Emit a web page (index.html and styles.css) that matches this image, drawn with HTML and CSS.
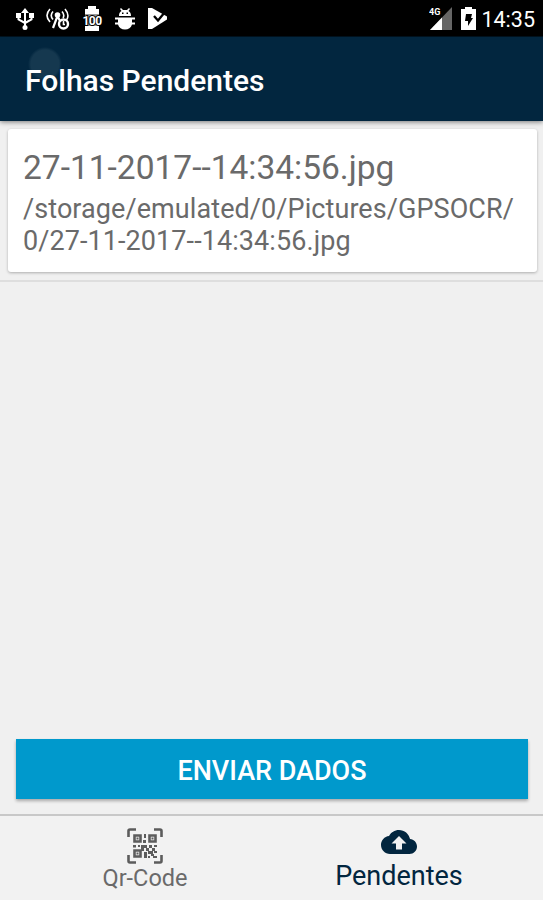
FILE: index.html
```html
<!DOCTYPE html>
<html lang="pt">
<head>
    <meta charset="UTF-8">
    <meta name="viewport" content="width=device-width, initial-scale=1.0">
    <title>Folhas Pendentes</title>
    <link rel="stylesheet" href="styles.css">
</head>
<body>
    <div class="status-bar">
        <div class="status-icons">
            <!-- usb -->
            <svg width="18" height="22" viewBox="0 0 18 22" fill="none" stroke="#fff" stroke-width="2">
                <path d="M9 3v16M2.500 7v4.500L9 15M15.500 7v4.500L9 15"/>
                <path d="M9 0l4 5H5zM0 5h5v5H0zM13 5h5v5h-5z" fill="#fff" stroke="none"/>
                <circle cx="9" cy="19.500" r="2.500" fill="#fff" stroke="none"/>
            </svg>
            <!-- antenna -->
            <svg class="antenna" width="24" height="22" viewBox="0 0 24 22" fill="none" stroke="#fff" stroke-width="1.600">
                <path d="M4 1Q-2 7.500 4 14M7 3.500Q3.500 7.500 7 11.500M19 1q5 6 1.500 11M16 3.500q3 3.500 1 6.500"/>
                <circle cx="11.500" cy="7" r="2.800" fill="#fff" stroke="none"/>
                <path d="M11.500 8L7 20M11.500 8l3 6" stroke-width="2.200"/>
                <circle cx="17.500" cy="16" r="4.500" stroke-width="2.400"/>
                <path d="M17.500 13v3.500h1.500"/>
            </svg>
            <!-- battery level -->
            <svg class="battery" width="30" height="25" viewBox="-5 0 30 25">
                <path d="M6 0h8v3h3v6H3V3h3zM3 19h14v6H3z" fill="#fff"/>
                <path d="M3 8h14v12H3z" fill="#999"/>
                <text class="battery-level" x="10" y="19" text-anchor="middle">100</text>
            </svg>
            <!-- android -->
            <svg width="20" height="22" viewBox="0 0 20 22" fill="#fff">
                <path d="M4 8c0-3 1-4 2.500-5L5 1l1-1 2 2h4l2-2 1 1-1.500 2C15 4 16 5 16 8zM0 9.500h20v2h-3v3h3v2h-3c-1 3.500-3.500 5-7 5s-6-1.500-7-5H0v-2h3v-3H0z"/>
                <path d="M7 4.500h1.500V6H7zM11.500 4.500H13V6h-1.500z" fill="#000"/>
            </svg>
            <!-- play check -->
            <svg width="20" height="21" viewBox="0 0 20 21">
                <path d="M0 0h4l15 8.500v3L4 21H0z" fill="#fff"/>
                <path d="M6 8l4 4.500L17 4" fill="none" stroke="#000" stroke-width="2.300"/>
            </svg>
        </div>
        <div class="status-info">
            <svg width="23" height="23" viewBox="0 0 23 23">
                <path d="M23 0v23H1z" fill="#666"/>
                <path d="M13 10.500V23H1z" fill="#fff"/>
                <text class="network" x="0" y="8">4G</text>
            </svg>
            <svg width="15" height="23" viewBox="0 0 15 23">
                <path d="M4 0h7v2h4v21H0V2h4z" fill="#fff"/>
                <path d="M5 7h6l-1 4h2L7 19v-5H4z" fill="#000"/>
            </svg>
            <span class="clock">14:35</span>
        </div>
    </div>

    <div class="toolbar">
        <h1>Folhas Pendentes</h1>
    </div>

    <div class="list">
        <div class="list-item">
            <div class="card">
                <div class="file-name">27-11-2017--14:34:56.jpg</div>
                <div class="file-path">/storage/emulated/0/Pictures/GPSOCR/<br>0/27-11-2017--14:34:56.jpg</div>
            </div>
        </div>
    </div>

    <button class="send">ENVIAR DADOS</button>

    <div class="tabs">
        <div class="tab">
            <svg width="36" height="36" viewBox="0 0 36 36" fill="#5c5c5c">
                <path d="M1.500 9V3q0-1.500 1.500-1.500h6M27 1.500h6q1.500 0 1.500 1.500v6M1.500 27v6q0 1.500 1.500 1.500h6M27 34.500h6q1.500 0 1.500-1.500v-6" fill="none" stroke="#5c5c5c" stroke-width="2.600"/>
                <path d="M7.500 7.500h6v6h-6zM22.500 7.500h6v6h-6zM7.500 22.500h6v6h-6z" fill="none" stroke="#5c5c5c" stroke-width="2.600"/>
                <path d="M9.500 9.500h2v2h-2zM24.500 9.500h2v2h-2zM9.500 24.500h2v2h-2zM17 6h2v4h-2zM16 12h3v3h-3zM6 17h3v2.500H6zM11 17h2v2h-2zM14 17h6v3h-3v3h-3zM22 17h3v3h-3zM27 17h3v2h-3zM19 20h3v3h-3zM25 20h3v3h-3zM17 24h3v6h-3zM21 23h5v3h-5zM27 23h3v2h-3zM24 26h3v2h3v2h-4v-2h-2zM21 28h2v2h-2z"/>
            </svg>
            <span>Qr-Code</span>
        </div>
        <div class="tab active">
            <svg class="cloud" width="36" height="24" viewBox="0 4 24 16">
                <path d="M19.350 10.040C18.670 6.590 15.640 4 12 4 9.110 4 6.600 5.640 5.350 8.040 2.340 8.360 0 10.910 0 14c0 3.310 2.690 6 6 6h13c2.760 0 5-2.240 5-5 0-2.640-2.050-4.780-4.650-4.960zM14 13v4h-4v-4H7l5-5 5 5h-3z" fill="#02263f"/>
            </svg>
            <span>Pendentes</span>
        </div>
    </div>
</body>
</html>
```
FILE: styles.css
```css
* {
    box-sizing: border-box;
}
body {
    margin: 0;
    height: 900px;
    display: flex;
    flex-direction: column;
    background-color: #f0f0f0;
    font-family: Roboto, sans-serif;
    color: #6a6a6a;
    overflow: hidden;
}
.status-bar {
    height: 37px;
    flex: none;
    display: flex;
    justify-content: space-between;
    align-items: center;
    padding: 1px 8px 0 16px;
    background-color: #000;
    border-bottom: 1px solid #001522;
}
.status-icons {
    display: flex;
    align-items: center;
    gap: 13px;
}
.antenna {
    margin: 0 -1px;
}
.battery {
    margin: 0 -5px;
}
.status-info {
    display: flex;
    align-items: center;
    gap: 9px;
}
.battery-level {
    font-size: 12px;
    font-weight: 700;
    letter-spacing: -0.5px;
    fill: #fff;
    stroke: #000;
    stroke-width: 2px;
    paint-order: stroke;
}
.network {
    font-size: 9px;
    font-weight: 700;
    fill: #fff;
}
.clock {
    margin-left: -4px;
    padding-top: 2px;
    font-size: 21.5px;
    line-height: 24px;
    color: #fff;
}
.toolbar {
    height: 84px;
    flex: none;
    display: flex;
    align-items: center;
    padding: 2px 25px 0;
    /* faded touch ripple above the title */
    background: radial-gradient(circle at 45px 27px, #15384f 14px, #02263f 17px);
    box-shadow: 0 1px 5px rgba(0, 0, 0, 0.5);
}
h1 {
    margin: 0;
    font-size: 30px;
    font-weight: 500;
    color: #fff;
}
.list {
    flex: 1;
}
.list-item {
    padding: 8px 6px 8px 8px;
    border-bottom: 2px solid #dedede;
}
.card {
    height: 143px;
    padding: 19px 15px;
    background-color: #fff;
    border-radius: 3px;
    box-shadow: 0 1px 3px rgba(0, 0, 0, 0.28);
}
.file-name {
    font-size: 33.5px;
    line-height: 40px;
    white-space: nowrap;
}
.file-path {
    margin-top: 5px;
    font-size: 27px;
    line-height: 32px;
    letter-spacing: 0.08px;
    white-space: nowrap;
}
.send {
    height: 60px;
    flex: none;
    margin: 0 15px 15px 16px;
    padding: 4px 0 0;
    border: none;
    background-color: #0099cc;
    box-shadow: 0 2px 3px rgba(0, 0, 0, 0.3);
    color: #fff;
    font-family: Roboto, sans-serif;
    font-size: 27px;
    font-weight: 500;
}
.tabs {
    height: 86px;
    flex: none;
    display: flex;
    border-top: 2px solid #c8c8c8;
    background-color: #f2f2f2;
}
.tab {
    flex: 1;
    display: flex;
    flex-direction: column;
    align-items: center;
    padding: 12px 0 0 18px;
    font-size: 23.5px;
    line-height: 28px;
}
.tab.active {
    padding: 14px 17px 0 0;
    font-size: 27px;
    line-height: 32px;
    color: #02263f;
}
.cloud {
    margin-bottom: 6px;
}
```
